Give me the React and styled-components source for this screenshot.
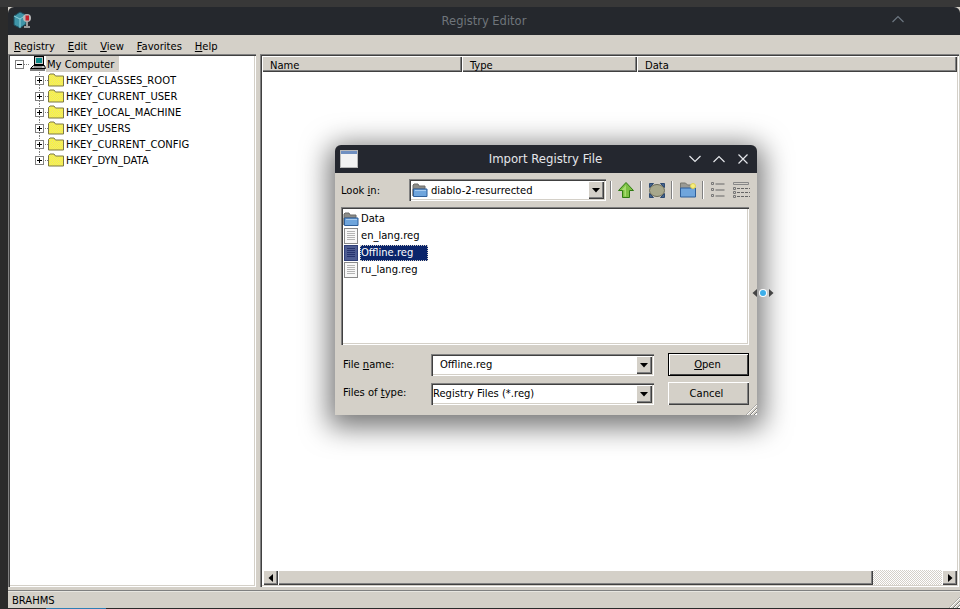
import React from "react"
import styled, { createGlobalStyle, css } from "styled-components"

const face = "#d4d0c8"

const sunken = css`
  box-shadow: inset 1px 1px #808080, inset 2px 2px #404040, inset -1px -1px #fff, inset -2px -2px ${face};
`
const raised = css`
  box-shadow: inset 1px 1px #fff, inset -1px -1px #404040, inset -2px -2px #808080;
`

const GlobalStyle = createGlobalStyle`
  html, body { margin: 0; padding: 0; background: #2b2b2b; }
  body {
    font-family: "DejaVu Sans Condensed", "DejaVu Sans", sans-serif;
    font-size: 11.1px;
    color: #000;
  }
`

const Underline = styled.span`
  text-decoration: underline;
`

const RegistryIcon = () => (
  <svg width="20" height="20" viewBox="0 0 20 20">
    <path d="M1 6l6-4 6 3v9l-6 4-6-3z" fill="#3f95a8" stroke="#1c4f5e" />
    <path d="M1 6l6 3 6-4M7 9v9" fill="none" stroke="#8fd0da" />
    <circle cx="14" cy="8" r="4" fill="#b8b8b8" />
    <rect x="12.500" y="5.500" width="3.500" height="5" fill="#c4222c" />
    <path d="M13 12h2v4h2v2h-6v-2h2z" fill="#9a9a9a" />
  </svg>
)

const ComputerIcon = () => (
  <svg width="16" height="16" viewBox="0 0 16 16">
    <rect x="4.500" y=".5" width="9" height="8" fill="#c8c8c8" stroke="#000" />
    <rect x="6" y="2" width="6" height="5" fill="#0a8a8a" />
    <path d="M3.500 9.500h11l1 3H.5z" fill="#c8c8c8" stroke="#000" />
    <path d="M0 14h15" stroke="#000" />
    <path d="M4 11h8" stroke="#666" />
  </svg>
)

const YellowFolder = () => (
  <svg width="16" height="14" viewBox="0 0 16 14">
    <defs>
      <pattern id="dither" width="2" height="2" patternUnits="userSpaceOnUse">
        <rect width="2" height="2" fill="#ffff30" />
        <rect width="1" height="1" fill="#e8dc80" />
        <rect x="1" y="1" width="1" height="1" fill="#e8dc80" />
      </pattern>
    </defs>
    <path d="M.5 13V2.500L2 1h4l1.500 2H15.500v10z" fill="url(#dither)" stroke="#7d7844" />
  </svg>
)

const BlueFolder = () => (
  <svg width="16" height="16" viewBox="0 0 16 16">
    <path d="M1 14V3l1-1h4l1 2h6v3H1z" fill="#8c8c88" stroke="#6a6a68" />
    <path d="M2 7h13v7.500H1.500V7z" fill="#6fa5dc" stroke="#2f5f9a" />
    <path d="M3 8.500h11" stroke="#a8ccf0" />
  </svg>
)

const FileIcon = ({ selected }) => (
  <svg width="14" height="16" viewBox="0 0 14 16">
    <rect x=".5" y=".5" width="13" height="15" fill={selected ? "#4e5d92" : "#f8f8f8"} stroke={selected ? "#2f3f78" : "#8a8a8a"} />
    <path d="M3 3.500h8M3 5.500h8M3 7.500h8M3 9.500h8M3 11.500h8" stroke={selected ? "#27346e" : "#b4b4b4"} />
  </svg>
)

const TreeGuide = ({ last }) => (
  <svg width="16" height="16" viewBox="0 0 16 16">
    <path d={last ? "M7.500 0v3" : "M7.500 0v3M7.500 13v3"} stroke="#808080" strokeDasharray="1 1" />
    <path d="M13 8.500h3" stroke="#808080" strokeDasharray="1 1" />
    <rect x="3.500" y="4.500" width="8" height="8" fill="#fff" stroke="#808080" />
    <path d="M5 8.500h5M7.500 6v5" stroke="#000" />
  </svg>
)

const RootGuide = () => (
  <svg width="18" height="16" viewBox="0 0 18 16">
    <rect x="3.500" y="4.500" width="8" height="8" fill="#fff" stroke="#808080" />
    <path d="M5 8.500h5" stroke="#000" />
    <path d="M12 8.500h6" stroke="#808080" strokeDasharray="1 1" />
  </svg>
)

const Caret = ({ dir }) => (
  <svg width="8" height="8" viewBox="0 0 8 8">
    {dir === "down" && <path d="M0 2h8L4 6.500z" fill="#000" />}
    {dir === "left" && <path d="M6 0v8L1.500 4z" fill="#000" />}
    {dir === "right" && <path d="M2 0v8L6.500 4z" fill="#000" />}
  </svg>
)

const Chevron = ({ up, color }) => (
  <svg width="14" height="10" viewBox="0 0 14 10">
    <path d={up ? "M1.500 8L7 2.500 12.500 8" : "M1.500 2L7 7.500 12.500 2"} fill="none" stroke={color} strokeWidth="1.200" />
  </svg>
)

const CloseIcon = () => (
  <svg width="12" height="12" viewBox="0 0 12 12">
    <path d="M1.500 1.500l9 9M10.500 1.500l-9 9" stroke="#e4e6ea" strokeWidth="1.200" />
  </svg>
)

const WindowGlyph = () => (
  <svg width="18" height="18" viewBox="0 0 18 18">
    <rect x=".5" y=".5" width="17" height="17" fill="#ececec" stroke="#b8b8b8" />
    <rect x="1" y="1" width="16" height="3" fill="#6f8fc0" />
    <rect x="1" y="4" width="16" height="13" fill="#f2f2f2" />
  </svg>
)

const UpArrow = () => (
  <svg width="16" height="16" viewBox="0 0 16 16">
    <path d="M8 .5L15.500 8.500H11.500V15.500H4.500V8.500H.5z" fill="#7cc043" stroke="#2f7a12" />
    <path d="M8 3L3.500 8h3v6.500H8z" fill="#a8dc70" />
  </svg>
)

const ViewIcon = () => (
  <svg width="16" height="15" viewBox="0 0 16 15">
    <ellipse cx="8" cy="7.500" rx="7.500" ry="6" fill="#a8a88c" stroke="#6a6a58" />
    <path d="M.5.500h4l-4 4zM15.500.500h-4l4 4zM.5 14.500h4l-4-4zM15.500 14.500h-4l4-4z" fill="#45648c" stroke="#2e4a70" />
  </svg>
)

const NewFolderIcon = () => (
  <svg width="16" height="16" viewBox="0 0 16 16">
    <path d="M.5 14V1h5l2 2h6v4H.5z" fill="#9a9a94" stroke="#77776f" />
    <path d="M.5 6h15v9H.5z" fill="#6fa5dc" stroke="#2f5f9a" />
    <circle cx="13" cy="4" r="2.500" fill="#f6ee80" stroke="#e0d050" />
  </svg>
)

const ListViewIcon = () => (
  <svg width="14" height="16" viewBox="0 0 14 16">
    <path d="M.5.500h2v2h-2zM.5 6.500h2v2h-2zM.5 12.500h2v2h-2z" fill="none" stroke="#777" />
    <path d="M4.500 2h9M4.500 8h9M4.500 14h9" stroke="#666" />
  </svg>
)

const DetailViewIcon = () => (
  <svg width="17" height="16" viewBox="0 0 17 16">
    <path d="M.5.500h15v2H.5z" fill="none" stroke="#888" />
    <path d="M.5 5.500h2v2h-2zM.5 9.500h2v2h-2zM.5 13.500h2v2h-2z" fill="none" stroke="#777" />
    <path d="M4 6.500h13M4 10.500h13M4 14.500h13" stroke="#666" strokeDasharray="3 1" />
  </svg>
)

const tree = ["HKEY_CLASSES_ROOT", "HKEY_CURRENT_USER", "HKEY_LOCAL_MACHINE", "HKEY_USERS", "HKEY_CURRENT_CONFIG", "HKEY_DYN_DATA"]
const files = [
  { name: "Data", folder: true },
  { name: "en_lang.reg" },
  { name: "Offline.reg", selected: true },
  { name: "ru_lang.reg" },
]

const App = () => (
  <Page>
    <GlobalStyle />
    <Window>
      <TitleBar>
        <RegistryIcon />
        <Title>Registry Editor</Title>
        <TitleChevron><Chevron up color="#6c7680" /></TitleChevron>
      </TitleBar>
      <MenuBar>
        <MenuItem><Underline>R</Underline>egistry</MenuItem>
        <MenuItem><Underline>E</Underline>dit</MenuItem>
        <MenuItem><Underline>V</Underline>iew</MenuItem>
        <MenuItem><Underline>F</Underline>avorites</MenuItem>
        <MenuItem><Underline>H</Underline>elp</MenuItem>
      </MenuBar>
      <Panes>
        <TreePane>
          <RootRow>
            <RootGuide />
            <ComputerIcon />
            <RootLabel>My Computer</RootLabel>
          </RootRow>
          {tree.map((key, i) => (
            <KeyRow key={key}>
              <TreeGuide last={i === tree.length - 1} />
              <YellowFolder />
              <KeyLabel>{key}</KeyLabel>
            </KeyRow>
          ))}
        </TreePane>
        <ListPane>
          <Header>
            <HeaderCell width={200}>Name</HeaderCell>
            <HeaderCell width={175}>Type</HeaderCell>
            <HeaderCell $grow>Data</HeaderCell>
          </Header>
          <ListBody />
          <ScrollBar>
            <ScrollButton><Caret dir="left" /></ScrollButton>
            <ScrollThumb />
            <ScrollTrack />
            <ScrollButton><Caret dir="right" /></ScrollButton>
          </ScrollBar>
        </ListPane>
      </Panes>
      <StatusBar>
        BRAHMS
        <Grip />
      </StatusBar>
    </Window>

    <Dialog>
      <DialogTitle>
        <WindowGlyph />
        <DialogName>Import Registry File</DialogName>
        <DialogControls>
          <Chevron color="#e4e6ea" />
          <Chevron up color="#e4e6ea" />
          <CloseIcon />
        </DialogControls>
      </DialogTitle>
      <DialogBody>
        <LookRow>
          <LookLabel>Look <Underline>i</Underline>n:</LookLabel>
          <Combo width={197}>
            <ComboValue $indent={1}>
              <BlueFolder />
              <span>diablo-2-resurrected</span>
            </ComboValue>
            <ComboButton><Caret dir="down" /></ComboButton>
          </Combo>
          <Toolbar>
            <Separator />
            <ToolSlot width={28}><UpArrow /></ToolSlot>
            <Separator />
            <ToolSlot width={29}><ViewIcon /></ToolSlot>
            <Separator />
            <ToolSlot width={29}><NewFolderIcon /></ToolSlot>
            <Separator />
            <ToolSlot width={28}><ListViewIcon /></ToolSlot>
            <ToolSlot width={18}><DetailViewIcon /></ToolSlot>
          </Toolbar>
        </LookRow>
        <FileList>
          {files.map((f) => (
            <FileRow key={f.name}>
              {f.folder ? <BlueFolder /> : <FileIcon selected={f.selected} />}
              <FileName $selected={f.selected}>{f.name}</FileName>
            </FileRow>
          ))}
        </FileList>
        <FormGrid>
          <FormLabel>File <Underline>n</Underline>ame:</FormLabel>
          <Combo width={223} height={22}>
            <ComboValue $indent={7}>Offline.reg</ComboValue>
            <ComboButton><Caret dir="down" /></ComboButton>
          </Combo>
          <DefaultButton><Underline>O</Underline>pen</DefaultButton>
          <FormLabel $raise>Files of <Underline>t</Underline>ype:</FormLabel>
          <Combo width={223} height={22}>
            <ComboValue>Registry Files (*.reg)</ComboValue>
            <ComboButton><Caret dir="down" /></ComboButton>
          </Combo>
          <PushButton>Cancel</PushButton>
        </FormGrid>
        <Grip />
      </DialogBody>
    </Dialog>

    <SplitHandle>
      <Caret dir="left" />
      <Dot />
      <Caret dir="right" />
    </SplitHandle>
  </Page>
)

const Page = styled.div`
  position: relative;
  width: 960px;
  height: 609px;
  padding: 7px 0 1px 8px;
  box-sizing: border-box;
  overflow: hidden;
  background: linear-gradient(#2f7fb5, #2f7fb5) 46px 608px / 60px 1px no-repeat, linear-gradient(#383838 0 7px, #2b2b2b 7px);
`

const Window = styled.div`
  display: flex;
  flex-direction: column;
  height: 100%;
  background: ${face};
`

const TitleBar = styled.div`
  position: relative;
  display: flex;
  align-items: center;
  justify-content: center;
  height: 28px;
  flex: none;
  background: #25282d;
  border-radius: 6px 6px 0 0;

  > svg {
    position: absolute;
    left: 5px;
    top: 3px;
  }
`

const Title = styled.div`
  font-family: "DejaVu Sans", sans-serif;
  font-size: 11.5px;
  color: #6f757b;
`

const TitleChevron = styled.div`
  position: absolute;
  right: 55px;
  top: 7px;
`

const MenuBar = styled.div`
  display: flex;
  align-items: center;
  height: 19px;
  flex: none;
  padding: 4px 0 0 6px;
  box-sizing: border-box;
`

const MenuItem = styled.div`
  margin-right: 13px;
`

const Panes = styled.div`
  display: flex;
  flex: 1;
  min-height: 0;
  gap: 4px;
  padding-right: 1px;
`

const TreePane = styled.div`
  width: 248px;
  flex: none;
  padding: 2px 0 0 2px;
  box-sizing: border-box;
  background: #fff;
  ${sunken}
`

const RootRow = styled.div`
  display: flex;
  align-items: center;
  height: 16px;
  padding-left: 2px;
`

const RootLabel = styled.div`
  padding: 0 5px 0 1px;
  height: 16px;
  line-height: 18px;
  background: ${face};
`

const KeyRow = styled.div`
  display: flex;
  align-items: center;
  height: 16px;
  padding-left: 22px;
`

const KeyLabel = styled.div`
  margin-left: 2px;
  height: 16px;
  line-height: 18px;
  white-space: nowrap;
`

const ListPane = styled.div`
  display: flex;
  flex-direction: column;
  flex: 1;
  min-width: 0;
  padding: 2px;
  background: #fff;
  ${sunken}
`

const Header = styled.div`
  display: flex;
  flex: none;
  height: 16px;
`

const HeaderCell = styled.div`
  width: ${(p) => (p.$grow ? "auto" : `${p.width}px`)};
  flex: ${(p) => (p.$grow ? 1 : "none")};
  padding-left: 8px;
  line-height: 20px;
  box-sizing: border-box;
  background: ${face};
  ${raised}
`

const ListBody = styled.div`
  flex: 1;
`

const ScrollBar = styled.div`
  display: flex;
  flex: none;
  height: 15px;
  margin-left: 1px;
  background: ${face};
`

const ScrollButton = styled.div`
  display: flex;
  align-items: center;
  justify-content: center;
  width: 15px;
  flex: none;
  background: ${face};
  ${raised}
`

const ScrollThumb = styled.div`
  width: 595px;
  flex: none;
  background: ${face};
  ${raised}
`

const ScrollTrack = styled.div`
  flex: 1;
  background: repeating-conic-gradient(${face} 0 25%, #fff 0 50%) 0 0 / 2px 2px;
`

const StatusBar = styled.div`
  position: relative;
  flex: none;
  height: 18px;
  margin-top: 3px;
  padding-left: 4px;
  line-height: 22px;
  box-shadow: inset 0 1px #808080, inset 0 2px #e8e6e0;
`

const Grip = styled.div`
  position: absolute;
  right: 0;
  bottom: 0;
  width: 11px;
  height: 11px;
  background: repeating-linear-gradient(135deg, transparent 0 1px, #808080 1px 2px, #fff 2px 3px);
  clip-path: polygon(100% 0, 100% 100%, 0 100%);
`

const Dialog = styled.div`
  position: absolute;
  left: 335px;
  top: 145px;
  width: 422px;
  height: 270px;
  display: flex;
  flex-direction: column;
  border-radius: 6px 6px 0 0;
  background: ${face};
  box-shadow: 0 6px 28px 6px rgba(0, 0, 0, 0.55);
`

const DialogTitle = styled.div`
  display: flex;
  align-items: center;
  flex: none;
  height: 28px;
  padding: 0 8px 0 5px;
  background: #24272f;
  border-radius: 6px 6px 0 0;
`

const DialogName = styled.div`
  flex: 1;
  padding-left: 45px;
  text-align: center;
  font-family: "DejaVu Sans", sans-serif;
  font-size: 11.7px;
  color: #e4e6ea;
`

const DialogControls = styled.div`
  display: flex;
  align-items: center;
  gap: 10px;

  svg:last-child {
    margin-left: 1px;
  }
`

const DialogBody = styled.div`
  position: relative;
  flex: 1;
  display: flex;
  flex-direction: column;
  padding: 6px 8px 0 6px;
`

const LookRow = styled.div`
  display: flex;
  align-items: center;
  height: 22px;
`

const LookLabel = styled.div`
  width: 68px;
  flex: none;
`

const Combo = styled.div`
  display: flex;
  width: ${(p) => p.width}px;
  height: ${(p) => p.height || 22}px;
  flex: none;
  padding: 2px;
  box-sizing: border-box;
  background: #fff;
  ${sunken}
`

const ComboValue = styled.div`
  display: flex;
  align-items: center;
  gap: 3px;
  flex: 1;
  white-space: nowrap;
  padding-left: ${(p) => p.$indent ?? 0}px;
`

const ComboButton = styled.div`
  display: flex;
  align-items: center;
  justify-content: center;
  width: 16px;
  flex: none;
  background: ${face};
  ${raised}
`

const Toolbar = styled.div`
  display: flex;
  align-items: center;
  height: 22px;
  padding-left: 4px;
`

const Separator = styled.div`
  width: 2px;
  height: 18px;
  flex: none;
  background: linear-gradient(90deg, #808080 50%, #fff 50%);
`

const ToolSlot = styled.div`
  display: flex;
  align-items: center;
  justify-content: center;
  width: ${(p) => p.width}px;
  flex: none;
`

const FileList = styled.div`
  height: 138px;
  flex: none;
  margin-top: 6px;
  padding: 2px 2px 0;
  box-sizing: border-box;
  background: #fff;
  ${sunken}
`

const FileRow = styled.div`
  display: flex;
  align-items: center;
  gap: 1px;
  height: 17px;

  &:first-child {
    margin-top: 1px;
  }

  > svg {
    width: 16px;
  }
`

const FileName = styled.div`
  padding: 0 2px 0 1px;
  line-height: 16px;
  ${(p) =>
    p.$selected &&
    css`
      background: #0a246a;
      color: #fff;
      padding-right: 15px;
      outline: 1px dotted #d4d0c8;
      outline-offset: -1px;
    `}
`

const FormGrid = styled.div`
  display: grid;
  grid-template-columns: 76px 223px 81px;
  grid-template-rows: 23px 23px;
  column-gap: 14px;
  row-gap: 6px;
  margin-top: 8px;
  align-items: center;
`

const FormLabel = styled.div`
  padding-left: 2px;
  padding-bottom: ${(p) => (p.$raise ? 2 : 0)}px;
  white-space: nowrap;
`

const PushButton = styled.div`
  display: flex;
  align-items: center;
  justify-content: center;
  height: 23px;
  padding-right: 4px;
  box-sizing: border-box;
  background: ${face};
  ${raised}
`

const DefaultButton = styled(PushButton)`
  padding-right: 2px;
  box-shadow: inset 0 0 0 1px #000, inset 2px 2px #fff, inset -2px -2px #404040;
`

const SplitHandle = styled.div`
  position: absolute;
  left: 751px;
  top: 289px;
  display: flex;
  align-items: center;

  svg path {
    fill: #444;
  }
`

const Dot = styled.div`
  width: 6px;
  height: 6px;
  margin: 0 1px;
  border-radius: 50%;
  background: #3daee9;
  box-shadow: 0 0 0 1px #fff;
`

export default App
